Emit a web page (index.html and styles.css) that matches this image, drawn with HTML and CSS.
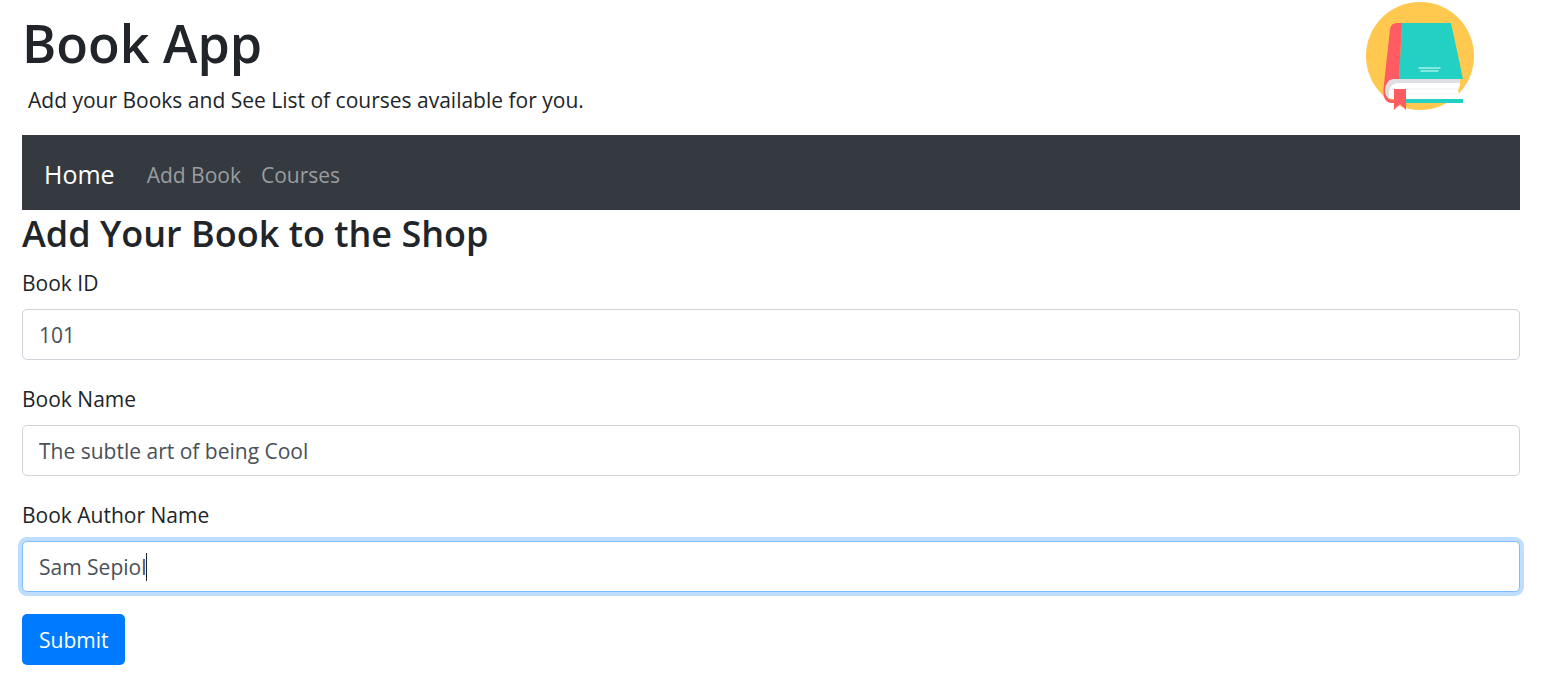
FILE: index.html
```
<!DOCTYPE html>
<html lang="en">
<head>
<meta charset="utf-8">
<meta name="viewport" content="width=device-width, initial-scale=1">
<title>Book App</title>
<link rel="stylesheet" href="styles.css">
</head>
<body>
<div class="page">
  <header class="header">
    <div class="intro">
      <h1 class="title">Book App</h1>
      <p class="tagline">Add your Books and See List of courses available for you.</p>
    </div>
    <svg class="logo" viewBox="0 0 108 110" role="img" aria-label="Book">
      <circle cx="54" cy="55" r="54" fill="#ffc950"/>
      <path d="M26 78h68v7q-3 4-1 8v5H26q-6-1-6-10t6-10z" fill="#fff"/>
      <path d="M36 22h49l12 56H33z" fill="#22d1c4"/>
      <path d="M36 22h-5q-6 0-7 6l-6 55q-3 19 8 19h10v-3h-8q-8 0-8-9 0-12 12-12h1z" fill="#ff5b62"/>
      <path d="M27 78h67v4H31q-7 1-8 9v7q-4-3-4-9 1-10 8-11z" fill="#dedfe2"/>
      <path d="M25 88h67M24 93h69" stroke="#f2f2f4" stroke-width="1"/>
      <path d="M38 98h59v4H38z" fill="#22d1c4"/>
      <path d="M28 88h12v21l-6-6-6 6z" fill="#ff5b62"/>
      <path d="M53 67h21M55 70h17" stroke="#a8f0e8" stroke-width="1.500" stroke-linecap="round"/>
    </svg>
  </header>
  <nav class="navbar">
    <a class="brand" href="#">Home</a>
    <a class="nav-link" href="#">Add Book</a>
    <a class="nav-link" href="#">Courses</a>
  </nav>
  <main>
    <h2 class="heading">Add Your Book to the Shop</h2>
    <form>
      <div class="field">
        <label class="label" for="book-id">Book ID</label>
        <input class="input" id="book-id" type="text" value="101">
      </div>
      <div class="field">
        <label class="label" for="book-name">Book Name</label>
        <input class="input" id="book-name" type="text" value="The subtle art of being Cool">
      </div>
      <div class="field">
        <label class="label" for="author">Book Author Name</label>
        <div class="caret-wrap">
          <input class="input input-active" id="author" type="text" value="Sam Sepiol">
          <span class="caret" aria-hidden="true"></span>
        </div>
      </div>
      <button class="submit" type="submit">Submit</button>
    </form>
  </main>
</div>
</body>
</html>
```
FILE: styles.css
```
* {
  box-sizing: border-box;
}

body {
  margin: 0;
  background: #fff;
  color: #212529;
  font-family: "Segoe UI", "Open Sans", "Noto Sans", sans-serif;
  font-size: 21px;
  line-height: 34px;
}

.page {
  padding: 0 28px 22px 22px;
}

.header {
  display: flex;
  justify-content: space-between;
  align-items: flex-start;
  padding: 1px 46px 18px 0;
}

.title {
  margin: 8px 0 6px;
  font-size: 52px;
  font-weight: 600;
  line-height: 68px;
}

.tagline {
  margin: 0;
  padding-left: 6px;
}

.logo {
  width: 108px;
  height: 110px;
}

.navbar {
  display: flex;
  align-items: center;
  padding: 22px 22px 18px;
  background: #343a40;
}

.brand {
  margin-right: 22px;
  color: #fff;
  font-size: 25px;
  line-height: 35px;
  text-decoration: none;
}

.nav-link {
  padding: 0 10px;
  color: #9a9da0;
  text-decoration: none;
}

.heading {
  margin: 0 0 8px;
  font-size: 36px;
  font-weight: 600;
  line-height: 48px;
}

.field {
  margin-bottom: 22px;
}

.label {
  display: block;
  margin-bottom: 9px;
}

.input {
  display: block;
  width: 100%;
  height: 51px;
  padding: 0 16px;
  border: 1px solid #ced4da;
  border-radius: 5px;
  outline: none;
  background: #fff;
  color: #495057;
  font: inherit;
}

.input-active,
.input:focus {
  border-color: #80bdff;
  box-shadow: 0 0 0 4px #bfdeff;
}

.caret-wrap {
  position: relative;
}

.caret {
  position: absolute;
  top: 12px;
  left: 124px;
  width: 1px;
  height: 28px;
  background: #212529;
}

.submit {
  display: block;
  height: 51px;
  padding: 0 17px;
  border: 0;
  border-radius: 5px;
  background: #007bff;
  color: #fff;
  font: inherit;
}
```
